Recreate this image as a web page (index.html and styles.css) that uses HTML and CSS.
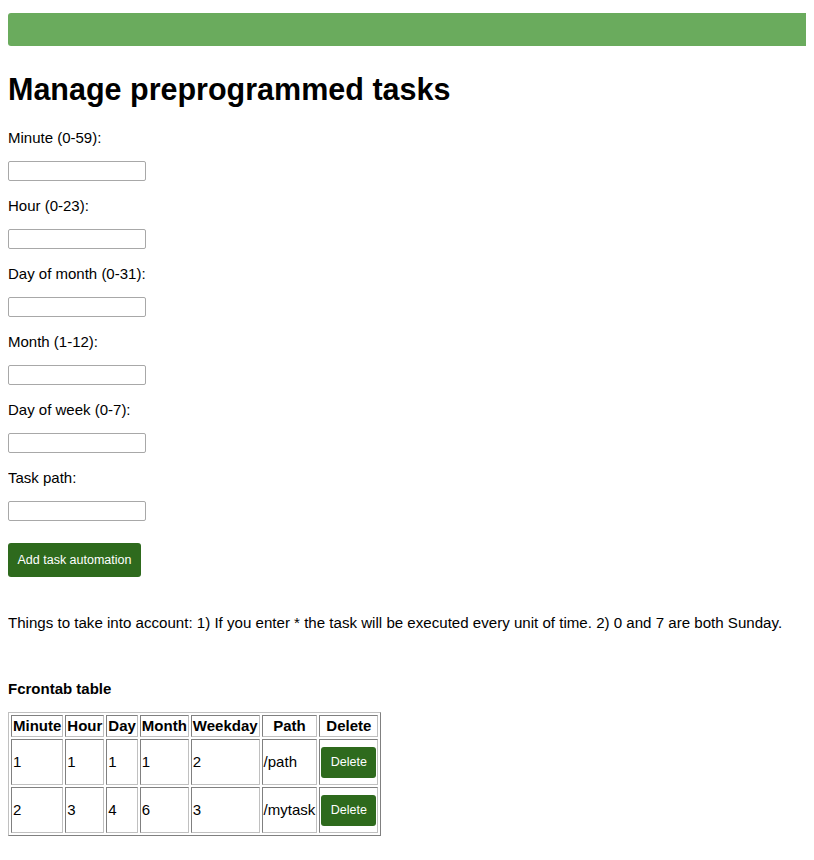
FILE: index.html
```html
<!DOCTYPE html>
<html lang="en">
<head>
<meta charset="utf-8">
<title>Manage preprogrammed tasks</title>
<link rel="stylesheet" href="styles.css">
</head>
<body>
<div class="topbar"></div>
<h1 class="title">Manage preprogrammed tasks</h1>
<form class="task-form">
  <label class="field-label" for="minute">Minute (0-59):</label>
  <input class="field-input" type="text" id="minute">
  <label class="field-label" for="hour">Hour (0-23):</label>
  <input class="field-input" type="text" id="hour">
  <label class="field-label" for="dom">Day of month (0-31):</label>
  <input class="field-input" type="text" id="dom">
  <label class="field-label" for="month">Month (1-12):</label>
  <input class="field-input" type="text" id="month">
  <label class="field-label" for="dow">Day of week (0-7):</label>
  <input class="field-input" type="text" id="dow">
  <label class="field-label" for="path">Task path:</label>
  <input class="field-input" type="text" id="path">
  <button class="btn btn-add" type="button">Add task automation</button>
</form>
<p class="note">Things to take into account: 1) If you enter * the task will be executed every unit of time. 2) 0 and 7 are both Sunday.</p>
<h4 class="table-title">Fcrontab table</h4>
<table class="cron-table">
  <tr><th>Minute</th><th>Hour</th><th>Day</th><th>Month</th><th>Weekday</th><th>Path</th><th>Delete</th></tr>
  <tr><td>1</td><td>1</td><td>1</td><td>1</td><td>2</td><td>/path</td><td><button class="btn btn-del" type="button">Delete</button></td></tr>
  <tr><td>2</td><td>3</td><td>4</td><td>6</td><td>3</td><td>/mytask</td><td><button class="btn btn-del" type="button">Delete</button></td></tr>
</table>
</body>
</html>
```

FILE: styles.css
```css
body {
  margin: 8px;
  font-family: "Liberation Sans", Arial, Helvetica, sans-serif;
  font-size: 15px;
  color: #000;
  background: #fff;
}
.topbar {
  margin: 5px -8px 0 0;
  height: 33px;
  background: #6aab5d;
  border-radius: 3px 0 0 3px;
}
.title {
  font-size: 30.5px;
  font-weight: bold;
  margin: 26px 0 22px;
  line-height: 34.5px;
}
.task-form {
  display: flex;
  flex-direction: column;
  align-items: flex-start;
  gap: 15.5px;
}
.field-label {
  display: block;
  line-height: 17px;
}
.field-input {
  box-sizing: border-box;
  width: 138px;
  height: 20px;
  margin: 0;
  border: 1px solid #a8a8a8;
  border-radius: 2px;
  background: #fff;
  padding: 1px 3px;
  font: inherit;
}
.btn {
  font-family: "Liberation Sans", Arial, Helvetica, sans-serif;
  color: #fff;
  background: #2e6a1d;
  border: none;
  border-radius: 3px;
  cursor: pointer;
}
.btn-add {
  margin-top: 6.5px;
  font-size: 12.5px;
  height: 34px;
  padding: 0 9.5px;
}
.note {
  margin: 37px 0 0;
  line-height: 17px;
  font-size: 15.1px;
}
.table-title {
  font-size: 15px;
  font-weight: bold;
  margin: 49px 0 15px;
  line-height: 17px;
}
.cron-table {
  border: 1px solid #8a8a8a;
  border-color: #c0c0c0 #808080 #808080 #c0c0c0;
  border-spacing: 2px;
  font-size: 15px;
}
.cron-table th,
.cron-table td {
  border: 1px solid #808080;
  border-color: #808080 #c0c0c0 #c0c0c0 #808080;
  padding: 1px;
  line-height: 18px;
}
.cron-table th {
  text-align: center;
  font-weight: bold;
}
.cron-table td {
  text-align: left;
  vertical-align: middle;
}
.btn-del {
  display: block;
  font-size: 12.5px;
  height: 31px;
  padding: 0 9.5px;
  margin: 5.5px 0;
}
```
